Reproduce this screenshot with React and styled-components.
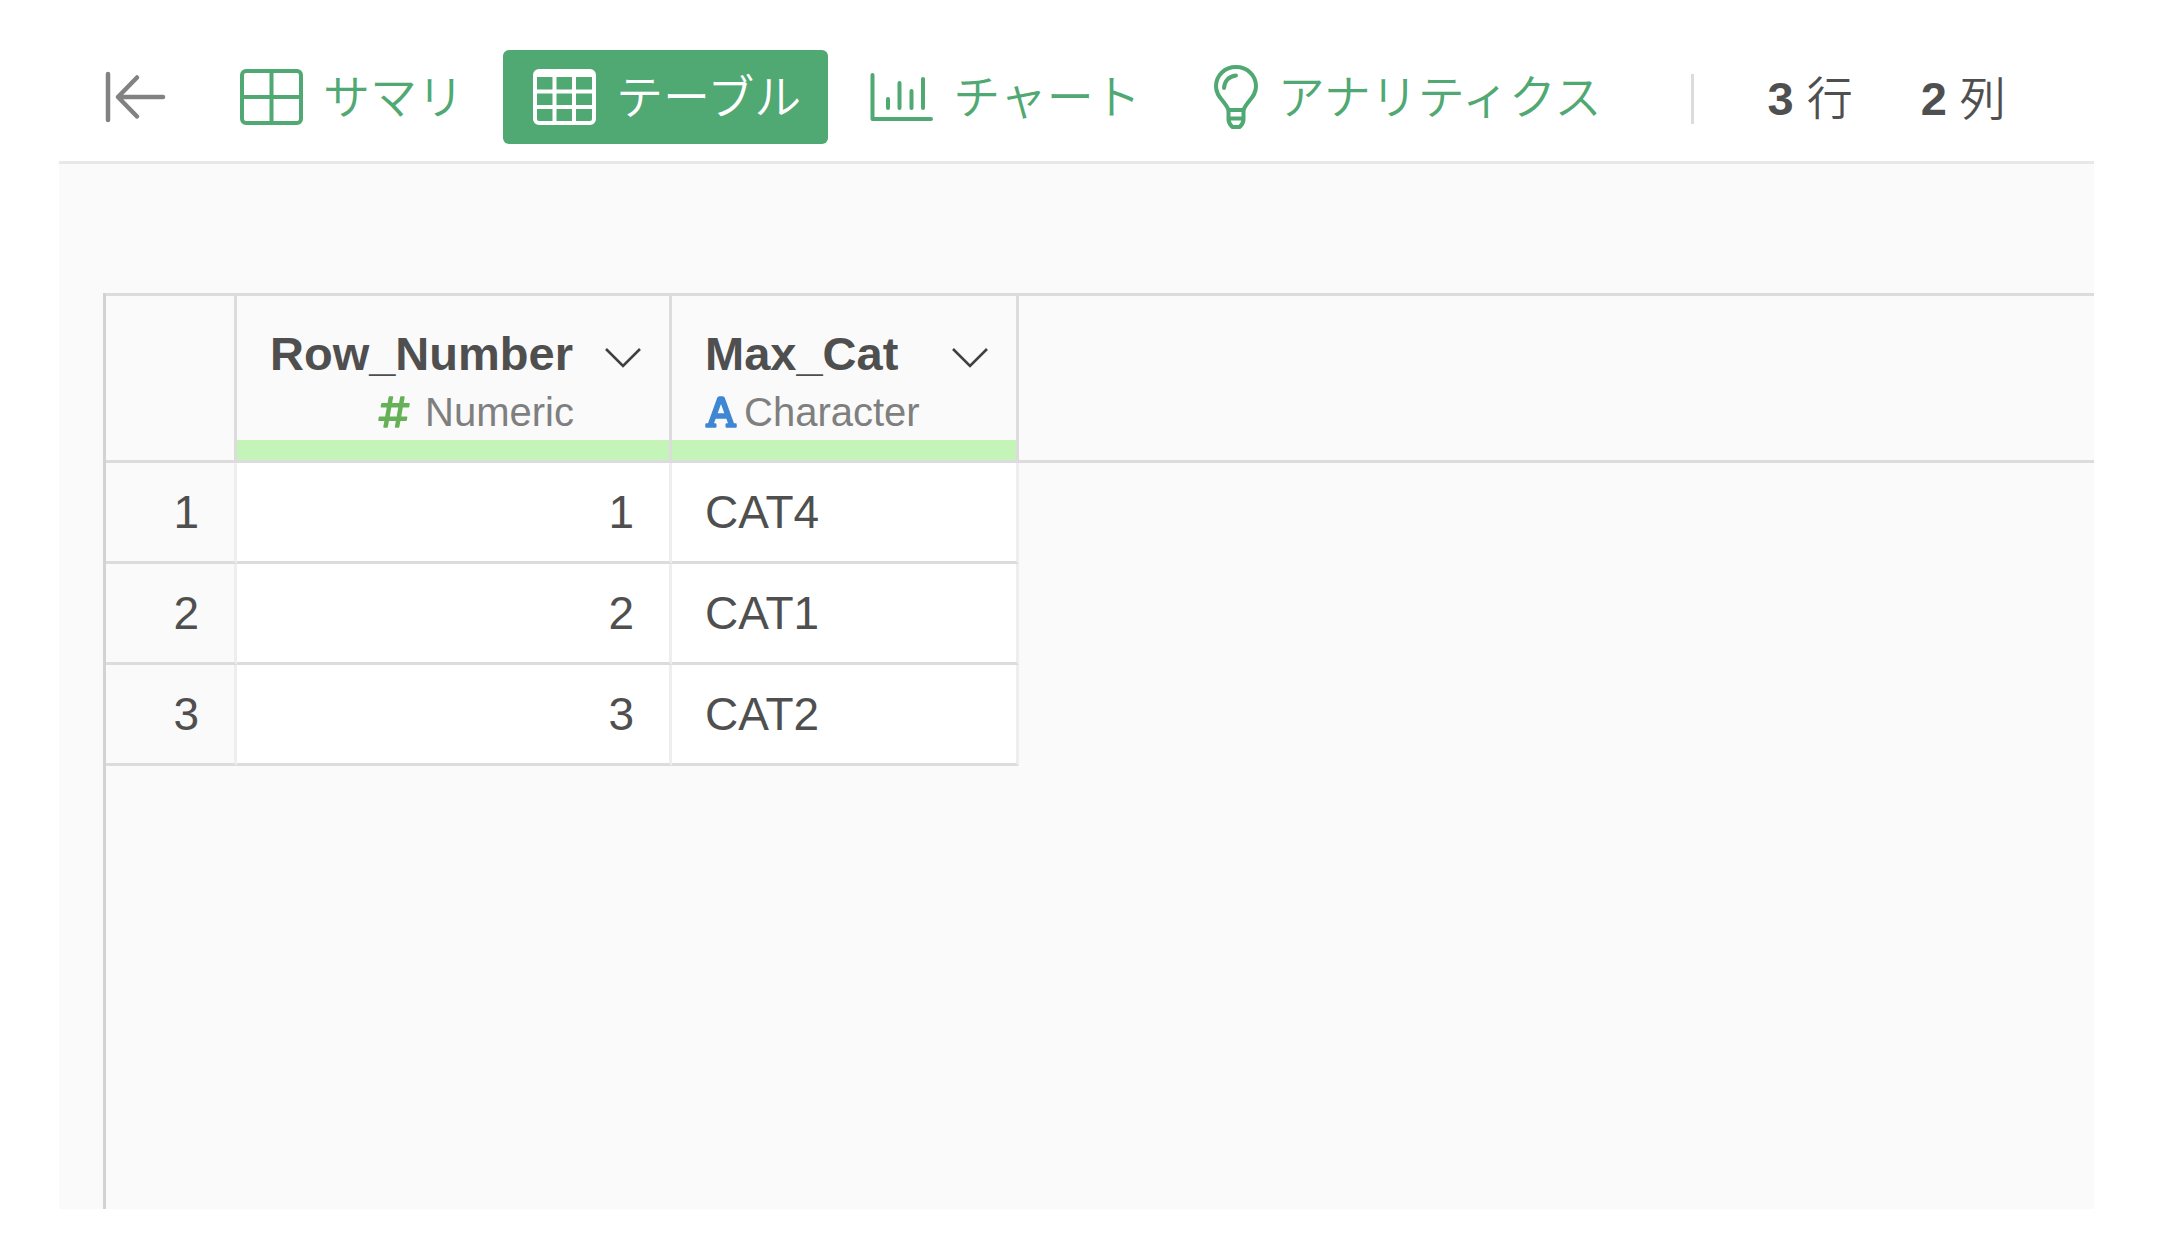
import React from "react";
import styled, { createGlobalStyle } from "styled-components";
import { FaFont, FaHashtag } from "react-icons/fa";

const GREEN = "#50a872";
const LINE = "#dcdcdc";
const SOFT_LINE = "#eeeeee";
const INK = "#4f4f4f";

const GlobalStyle = createGlobalStyle`
  *, *::before, *::after { box-sizing: border-box; }
  body {
    margin: 0;
    background: #fff;
    color: ${INK};
    font-family: "Liberation Sans", "Noto Sans CJK JP", sans-serif;
  }
`;

const Page = styled.div`
  display: flex;
  flex-direction: column;
  min-height: 100vh;
  padding: 0 90px 39px 59px;
`;

const Toolbar = styled.header`
  display: flex;
  align-items: center;
  padding: 50px 0 17px 46px;
  border-bottom: 3px solid #e8e8e8;
`;

const IconButton = styled.button`
  display: flex;
  padding: 0;
  border: 0;
  background: none;
  color: ${(p) => p.$color || INK};
  cursor: pointer;
`;

const MenuButton = styled(IconButton)`
  padding-top: 8px;
`;

const Tabs = styled.nav`
  display: flex;
  gap: 12px;
  margin-left: 43px;
`;

const Tab = styled.button`
  display: flex;
  align-items: center;
  gap: 20px;
  height: 94px;
  padding: 0 27px 0 30px;
  border: 0;
  border-radius: 6px;
  background: ${(p) => (p.$active ? GREEN : "transparent")};
  color: ${(p) => (p.$active ? "#fff" : GREEN)};
  font-family: "Noto Sans CJK JP", sans-serif;
  font-size: 47px;
  font-weight: 350;
  line-height: 60px;
  white-space: nowrap;
  cursor: pointer;
`;

const TabLabel = styled.span`
  padding-bottom: 6px;
`;

const Stats = styled.div`
  display: flex;
  align-items: center;
  gap: 68px;
  margin-left: 62px;
  font-family: "Noto Sans CJK JP", sans-serif;
  font-size: 46px;
  font-weight: 350;
  line-height: 60px;
  white-space: nowrap;
`;

const Divider = styled.span`
  width: 3px;
  height: 50px;
  margin: 4px 6px 0 0;
  background: ${LINE};
`;

const Count = styled.b`
  margin-right: 13px;
  font-family: "Liberation Sans", sans-serif;
  font-size: 47px;
  font-weight: 700;
`;

const Content = styled.main`
  display: flex;
  flex: 1;
  flex-direction: column;
  padding: 129px 0 0 44px;
  background: #fafafa;
`;

const GridFrame = styled.div`
  flex: 1;
  border-left: 3px solid #d2d2d2;
`;

const Grid = styled.table`
  width: 100%;
  table-layout: fixed;
  border-collapse: separate;
  border-spacing: 0;
  font-size: 46px;
`;

const Col = styled.col`
  width: ${(p) => p.$width || "auto"};
`;

const HeadCell = styled.th`
  height: 170px;
  padding: 0;
  border: solid ${LINE};
  border-width: 3px ${(p) => (p.$last ? "0" : "3px")} 3px 0;
  font-weight: 400;
  vertical-align: bottom;
`;

const HeadBody = styled.div`
  display: grid;
  grid-template-columns: 1fr auto;
  align-items: center;
  padding: 0 28px 0 33px;
`;

const ColumnName = styled.span`
  font-size: 47px;
  font-weight: 700;
  line-height: 60px;
  text-align: left;
`;

const ColumnType = styled.span`
  display: flex;
  grid-column: 1 / -1;
  align-items: center;
  justify-content: ${(p) => (p.$numeric ? "flex-end" : "flex-start")};
  gap: ${(p) => (p.$numeric ? "15px" : "7px")};
  padding-right: ${(p) => (p.$numeric ? "67px" : "0")};
  color: #7f7f7f;
  font-size: 40px;
  line-height: 56px;

  svg {
    width: 32px;
    height: 36px;
    color: ${(p) => (p.$numeric ? "#66b158" : "#3f87d3")};
  }
`;

const QualityBar = styled.div`
  height: 20px;
  background: #c5f4b8;
`;

const RowHead = styled.th`
  height: 101px;
  padding: 0 35px 0 0;
  border: solid ${LINE};
  border-width: 0 3px 3px 0;
  border-right-color: ${SOFT_LINE};
  font-weight: 400;
  text-align: right;
`;

const Cell = styled.td`
  height: 101px;
  padding: 0 35px 0 33px;
  border: solid ${LINE};
  border-width: 0 3px 3px 0;
  border-right-color: ${SOFT_LINE};
  background: #fff;
  text-align: ${(p) => (p.$numeric ? "right" : "left")};
`;

const BackIcon = () => (
  <svg width="62" height="52" viewBox="0 0 62 52" fill="none" stroke="currentColor" strokeWidth="4.5" strokeLinecap="round" strokeLinejoin="round" aria-hidden="true">
    <path d="M3 3v46M13 26h45M32 6.500L13 26l19 19.500" />
  </svg>
);

const SummaryIcon = () => (
  <svg width="63" height="56" viewBox="0 0 63 56" fill="none" stroke="currentColor" strokeWidth="4" aria-hidden="true">
    <rect x="2" y="2" width="59" height="52" rx="4" />
    <path d="M31.500 2v52M2 28h59" />
  </svg>
);

const TableIcon = () => (
  <svg width="63" height="56" viewBox="0 0 63 56" fill="none" stroke="currentColor" strokeWidth="4" aria-hidden="true">
    <rect x="2" y="2" width="59" height="52" rx="4" />
    <path d="M2 5h59" strokeWidth="6" />
    <path d="M21.500 6v48M41 6v48M2 22.500h59M2 38h59" />
  </svg>
);

const ChartIcon = () => (
  <svg width="63" height="56" viewBox="0 0 63 56" fill="none" stroke="currentColor" strokeWidth="4" strokeLinecap="round" strokeLinejoin="round" aria-hidden="true">
    <path d="M2.500 6v44H61M18 30v9M29.500 14v25M41.500 22v17M53 10v29" />
  </svg>
);

const BulbIcon = () => (
  <svg width="48" height="64" viewBox="-4 0 48 64" fill="none" stroke="currentColor" strokeWidth="4" strokeLinecap="round" strokeLinejoin="round" aria-hidden="true">
    <path d="M14.500 45C11 36 2 32 2 21.500 2 10 11 2 22 2s20 8 20 19.500C42 32 33 36 29.500 45Z" />
    <path d="M14.500 45v10q1 5 4 7h7q3-2 4-7V45M14.500 53.500h15M10 23q1-11 12-12.500" />
  </svg>
);

const ChevronIcon = () => (
  <svg width="36" height="20" viewBox="0 0 36 20" fill="none" stroke="currentColor" strokeWidth="2.600" aria-hidden="true">
    <path d="M1 1l17 17L35 1" />
  </svg>
);

const tabs = [
  { label: "サマリ", Icon: SummaryIcon },
  { label: "テーブル", Icon: TableIcon, active: true },
  { label: "チャート", Icon: ChartIcon },
  { label: "アナリティクス", Icon: BulbIcon },
];

const columns = [
  { name: "Row_Number", type: "Numeric", Icon: FaHashtag, numeric: true },
  { name: "Max_Cat", type: "Character", Icon: FaFont },
];

const rows = [
  [1, "CAT4"],
  [2, "CAT1"],
  [3, "CAT2"],
];

export default function App() {
  return (
    <Page>
      <GlobalStyle />
      <Toolbar>
        <IconButton $color="#828282" aria-label="戻る">
          <BackIcon />
        </IconButton>
        <Tabs>
          {tabs.map(({ label, Icon, active }) => (
            <Tab key={label} $active={active} aria-current={active ? "page" : undefined}>
              <Icon />
              <TabLabel>{label}</TabLabel>
            </Tab>
          ))}
        </Tabs>
        <Stats>
          <Divider />
          <span><Count>{rows.length}</Count>行</span>
          <span><Count>{columns.length}</Count>列</span>
        </Stats>
      </Toolbar>
      <Content>
        <GridFrame>
          <Grid>
            <colgroup>
              <Col $width="131px" />
              <Col $width="435px" />
              <Col $width="347px" />
              <Col />
            </colgroup>
            <thead>
              <tr>
                <HeadCell as="td" />
                {columns.map(({ name, type, Icon, numeric }) => (
                  <HeadCell key={name} scope="col">
                    <HeadBody>
                      <ColumnName>{name}</ColumnName>
                      <MenuButton $color="#404040" aria-label={name}>
                        <ChevronIcon />
                      </MenuButton>
                      <ColumnType $numeric={numeric}>
                        <Icon aria-hidden="true" />
                        {type}
                      </ColumnType>
                    </HeadBody>
                    <QualityBar />
                  </HeadCell>
                ))}
                <HeadCell as="td" $last />
              </tr>
            </thead>
            <tbody>
              {rows.map(([number, category]) => (
                <tr key={number}>
                  <RowHead scope="row">{number}</RowHead>
                  <Cell $numeric>{number}</Cell>
                  <Cell>{category}</Cell>
                </tr>
              ))}
            </tbody>
          </Grid>
        </GridFrame>
      </Content>
    </Page>
  );
}
